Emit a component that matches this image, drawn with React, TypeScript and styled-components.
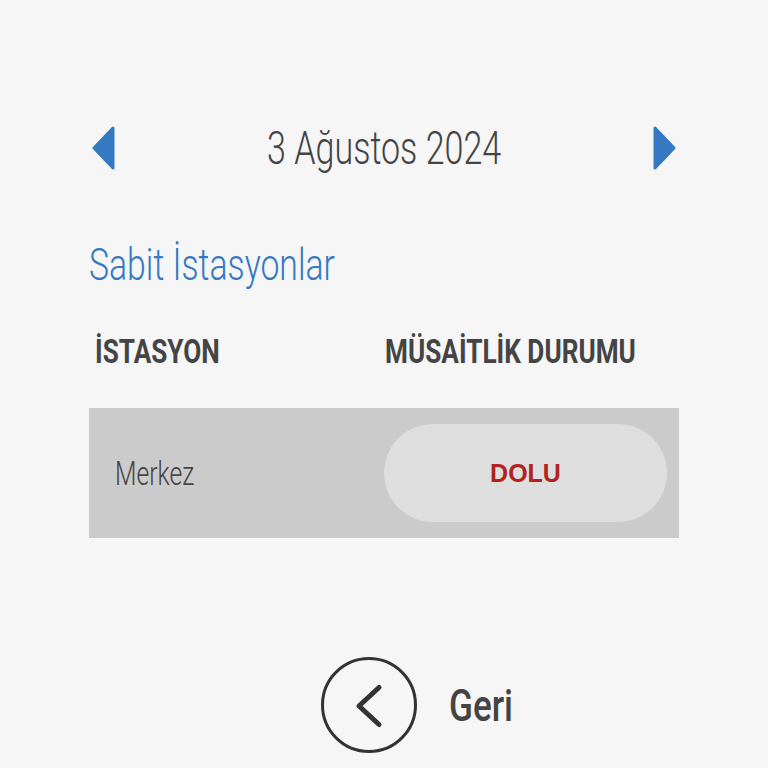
import React from "react";
import styled, { createGlobalStyle } from "styled-components";

//Page defaults
const GlobalStyle = createGlobalStyle`
  html, body {
    margin: 0;
    padding: 0;
    background: #f6f6f6;
  }
  body {
    font-family: Roboto, "Liberation Sans", sans-serif;
    color: #444;
  }
`;

interface IStation {
  name: string;
  status: string;
}

const stations: IStation[] = [{ name: "Merkez", status: "DOLU" }];

const Arrow = ({ dir }: { dir: "left" | "right" }) => (
  <svg width="30" height="48" viewBox="0 0 30 48">
    {dir === "left" ? (
      <polygon
        points="24,4 24,44 5,24"
        fill="#3579c3"
        stroke="#3579c3"
        strokeWidth="3"
        strokeLinejoin="round"
      />
    ) : (
      <polygon
        points="6,4 6,44 25,24"
        fill="#3579c3"
        stroke="#3579c3"
        strokeWidth="3"
        strokeLinejoin="round"
      />
    )}
  </svg>
);

const App = () => {
  return (
    <>
      <GlobalStyle />
      <Wrapper>
        <DateRow>
          <ArrowButton type="button" aria-label="Önceki gün">
            <Arrow dir="left" />
          </ArrowButton>
          <Condensed $sx={0.74}>3 Ağustos 2024</Condensed>
          <ArrowButton type="button" aria-label="Sonraki gün">
            <Arrow dir="right" />
          </ArrowButton>
        </DateRow>

        <Title>
          <Condensed $sx={0.75} $origin="left">
            Sabit İstasyonlar
          </Condensed>
        </Title>

        <HeaderRow>
          <HeadCell $pad={6}>
            <Condensed $sx={0.77} $origin="left">
              İSTASYON
            </Condensed>
          </HeadCell>
          <HeadCell $pad={1}>
            <Condensed $sx={0.77} $origin="left">
              MÜSAİTLİK DURUMU
            </Condensed>
          </HeadCell>
        </HeaderRow>

        {stations.map((s) => (
          <StationRow key={s.name}>
            <StationName>
              <Condensed $sx={0.75} $origin="left">
                {s.name}
              </Condensed>
            </StationName>
            <StatusPill>{s.status}</StatusPill>
          </StationRow>
        ))}

        <BackRow>
          <BackCircle type="button" aria-label="Geri">
            <svg width="40" height="48" viewBox="0 0 40 48">
              <polyline
                points="30,6.5 10,25 30,43.5"
                fill="none"
                stroke="#333"
                strokeWidth="5"
                strokeLinecap="round"
                strokeLinejoin="round"
              />
            </svg>
          </BackCircle>
          <BackLabel>
            <Condensed $sx={0.78} $origin="left">
              Geri
            </Condensed>
          </BackLabel>
        </BackRow>
      </Wrapper>
    </>
  );
};

const Wrapper = styled.div`
  width: 590px;
  margin: 0 auto;
  padding-top: 124px;
  display: flex;
  flex-direction: column;
`;

const Condensed = styled.span<{ $sx: number; $origin?: string }>`
  display: inline-block;
  white-space: nowrap;
  transform: scaleX(${(p) => p.$sx});
  transform-origin: ${(p) => p.$origin || "center"};
`;

const DateRow = styled.div`
  display: flex;
  align-items: center;
  justify-content: space-between;
  height: 48px;
  font-size: 46px;
  font-weight: 300;
  line-height: 48px;
  color: #444;
`;

const ArrowButton = styled.button`
  background: transparent;
  border: none;
  padding: 0;
  width: 30px;
  height: 48px;
  cursor: pointer;
  display: flex;
  align-items: center;
  justify-content: center;
`;

const Title = styled.h2`
  margin: 67px 0 0 0;
  font-size: 45px;
  font-weight: 300;
  line-height: 52px;
  color: #3579c3;
`;

const HeaderRow = styled.div`
  display: grid;
  grid-template-columns: 295px 1fr;
  margin-top: 40px;
  height: 40px;
  align-items: center;
`;

const HeadCell = styled.div<{ $pad: number }>`
  padding-left: ${(p) => p.$pad}px;
  font-size: 34px;
  font-weight: 700;
  line-height: 40px;
  color: #444;
`;

const StationRow = styled.div`
  display: grid;
  grid-template-columns: 295px 1fr;
  align-items: center;
  margin-top: 37px;
  height: 130px;
  padding: 16px 12px 16px 0;
  box-sizing: border-box;
  background: #cbcbcb;
`;

const StationName = styled.div`
  padding-left: 26px;
  font-size: 33px;
  font-weight: 300;
  color: #444;
`;

const StatusPill = styled.div`
  height: 98px;
  border-radius: 49px;
  background: #dedede;
  display: flex;
  align-items: center;
  justify-content: center;
  font-family: "Liberation Sans", Arial, sans-serif;
  font-size: 25px;
  font-weight: 700;
  color: #b3221f;
`;

const BackRow = styled.div`
  display: flex;
  align-items: center;
  margin-top: 119px;
  padding-left: 232px;
  gap: 32px;
`;

const BackCircle = styled.button`
  width: 96px;
  height: 96px;
  box-sizing: border-box;
  border-radius: 50%;
  border: 3px solid #333;
  background: transparent;
  padding: 0;
  display: flex;
  align-items: center;
  justify-content: center;
  cursor: pointer;
`;

const BackLabel = styled.div`
  font-size: 45px;
  font-weight: 500;
  color: #444;
`;

export default App;
